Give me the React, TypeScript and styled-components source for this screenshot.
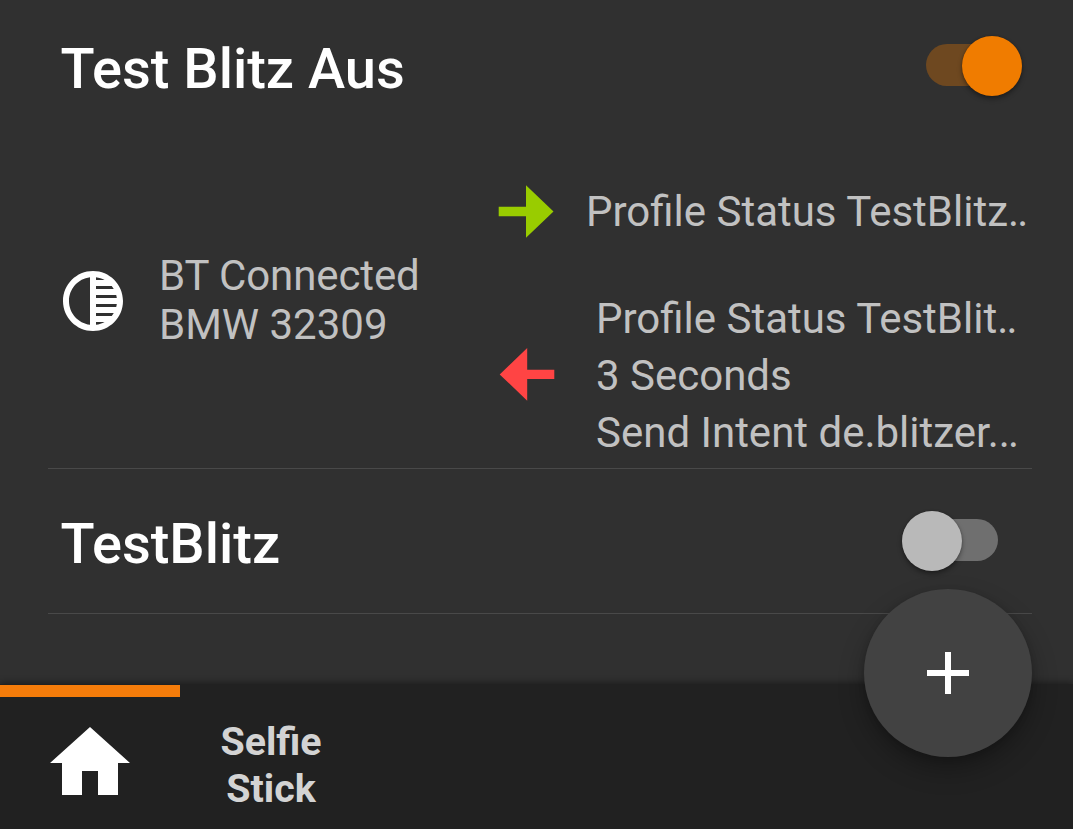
import styled, { createGlobalStyle } from "styled-components";

const GlobalStyle = createGlobalStyle`
  * {
    box-sizing: border-box;
  }
  body {
    margin: 0;
    background: #ffffff;
    font-family: Roboto, sans-serif;
  }
`;

const Screen = styled.div`
  position: relative;
  width: 1073px;
  height: 829px;
  display: flex;
  flex-direction: column;
  overflow: hidden;
  background: #303030;
`;

const ProfileList = styled.div`
  flex: 1;
  padding: 0 41px 0 48px;
`;

const Profile = styled.div<{ $height: number }>`
  height: ${({ $height }) => $height}px;
  border-bottom: 1px solid #494949;
`;

const ProfileHeader = styled.div<{ $top: number; $right: number }>`
  display: flex;
  justify-content: space-between;
  align-items: flex-start;
  padding: ${({ $top, $right }) => `${$top}px ${$right}px 0 12.4px`};
`;

const Title = styled.div`
  font-size: 56px;
  font-weight: 500;
  line-height: 66px;
  white-space: nowrap;
  color: #ffffff;
`;

const Track = styled.div<{ $on?: boolean }>`
  width: 96px;
  height: 42px;
  margin-top: 8px;
  display: flex;
  align-items: center;
  justify-content: ${({ $on }) => ($on ? "flex-end" : "flex-start")};
  border-radius: 21px;
  background: ${({ $on }) => ($on ? "#6e4820" : "#6f6f6f")};
`;

const Thumb = styled.div<{ $on?: boolean }>`
  width: 60px;
  height: 60px;
  flex-shrink: 0;
  margin-top: 1px;
  border-radius: 50%;
  background: ${({ $on }) => ($on ? "#f07c00" : "#b9b9b9")};
  box-shadow: 0 3px 5px rgba(0, 0, 0, 0.35), 0 0 2px rgba(0, 0, 0, 0.25);
`;

const ProfileBody = styled.div`
  display: grid;
  grid-template-columns: 448px 1fr;
  margin-top: 82px;
`;

const Contexts = styled.div`
  display: flex;
  align-items: center;
  gap: 30px;
  height: 98px;
  margin-top: 68px;
  padding-left: 9px;
`;

const Text = styled.div<{ $line: number }>`
  font-size: 42px;
  font-weight: 400;
  line-height: ${({ $line }) => $line}px;
  white-space: nowrap;
  color: #c1c1c1;
`;

const ContextText = styled(Text)`
  margin-top: -2px;
`;

const ContextName = styled.div`
  letter-spacing: -0.1px;
`;

const Dots = styled.span`
  letter-spacing: -1.8px;
`;

const Tasks = styled.div`
  display: flex;
  flex-direction: column;
  gap: 52px;
`;

const Task = styled.div<{ $gap: number }>`
  display: flex;
  align-items: center;
  gap: ${({ $gap }) => $gap}px;
`;

const Arrow = styled.svg<{ $lift?: number }>`
  width: 60px;
  height: 54px;
  flex-shrink: 0;
  margin-bottom: ${({ $lift = 0 }) => $lift}px;
`;

const TabBar = styled.div`
  height: 145px;
  display: flex;
  background: #212121;
  box-shadow: 0 -1px 7px rgba(0, 0, 0, 0.45);
`;

const Tab = styled.div<{ $active?: boolean }>`
  width: 180px;
  display: flex;
  justify-content: center;
  padding-top: 18px;
  border-top: 12px solid ${({ $active }) => ($active ? "#f57c0a" : "transparent")};
  margin-top: 1px;
`;

const TabLabel = styled.div`
  padding: 3px 0 0 2px;
  font-size: 39.4px;
  font-weight: 700;
  line-height: 47px;
  text-align: center;
  color: #d3d3d3;
`;

const AddButton = styled.div`
  position: absolute;
  left: 864px;
  top: 589px;
  width: 168px;
  height: 168px;
  display: flex;
  align-items: center;
  justify-content: center;
  border-radius: 50%;
  background: #424242;
  box-shadow: 0 12px 26px rgba(0, 0, 0, 0.3), 0 2px 6px rgba(0, 0, 0, 0.15);
`;

const TonalityIcon = () => (
  <svg width="72" height="72" viewBox="0 0 24 24">
    <path
      fill="#fff"
      d="M12 2C6.480 2 2 6.480 2 12s4.480 10 10 10 10-4.480 10-10S17.520 2 12 2zm-1 17.930c-3.940-.490-7-3.850-7-7.930s3.050-7.440 7-7.930v15.860zm2-15.860c1.030.130 2 .450 2.870.930H13v-.930zM13 7h5.240c.250.310.480.650.680 1H13V7zm0 3h6.740c.080.330.150.660.190 1H13v-1zm0 9.930V19h2.870c-.870.480-1.840.800-2.870.930zM18.240 17H13v-1h5.920c-.200.350-.430.690-.680 1zm1.500-3H13v-1h6.930c-.040.340-.110.670-.190 1z"
    />
  </svg>
);

const EnterArrow = () => (
  <Arrow viewBox="0 0 60 54">
    <path fill="#99cc00" d="M2.700 22.800H30V1.200L57.500 27.500 30 53.800V32.200H2.700z" />
  </Arrow>
);

const ExitArrow = () => (
  <Arrow viewBox="0 0 60 54" $lift={4}>
    <path fill="#ff4444" d="M58.300 22.700H31.200V1.100L3.700 27.400 31.200 53.700V32.100H58.300z" />
  </Arrow>
);

const HomeIcon = () => (
  <svg width="96" height="96" viewBox="0 0 24 24">
    <path fill="#fff" d="M10 20v-6h4v6h5v-8h3L12 3 2 12h3v8z" />
  </svg>
);

const Toggle = ({ on }: { on?: boolean }) => (
  <Track $on={on}>
    <Thumb $on={on} />
  </Track>
);

export default function App() {
  return (
    <>
      <GlobalStyle />
      <Screen>
        <ProfileList>
          <Profile $height={469}>
            <ProfileHeader $top={36} $right={10}>
              <Title>Test Blitz Aus</Title>
              <Toggle on />
            </ProfileHeader>
            <ProfileBody>
              <Contexts>
                <TonalityIcon />
                <ContextText $line={49}>
                  <ContextName>BT Connected</ContextName>
                  BMW 32309
                </ContextText>
              </Contexts>
              <Tasks>
                <Task $gap={30}>
                  <EnterArrow />
                  <Text $line={49}>
                    Profile Status TestBlitz<Dots>..</Dots>
                  </Text>
                </Task>
                <Task $gap={40}>
                  <ExitArrow />
                  <Text $line={57}>
                    Profile Status TestBlit<Dots>..</Dots>
                    <br />
                    3 Seconds
                    <br />
                    Send Intent de.blitzer.<Dots>..</Dots>
                  </Text>
                </Task>
              </Tasks>
            </ProfileBody>
          </Profile>
          <Profile $height={145}>
            <ProfileHeader $top={42} $right={34}>
              <Title>TestBlitz</Title>
              <Toggle />
            </ProfileHeader>
          </Profile>
        </ProfileList>
        <TabBar>
          <Tab $active>
            <HomeIcon />
          </Tab>
          <Tab>
            <TabLabel>
              Selfie
              <br />
              Stick
            </TabLabel>
          </Tab>
        </TabBar>
        <AddButton>
          <svg width="42" height="42" viewBox="0 0 42 42">
            <path fill="#fff" d="M18 0h6v18h18v6H24v18h-6V24H0v-6h18z" />
          </svg>
        </AddButton>
      </Screen>
    </>
  );
}
